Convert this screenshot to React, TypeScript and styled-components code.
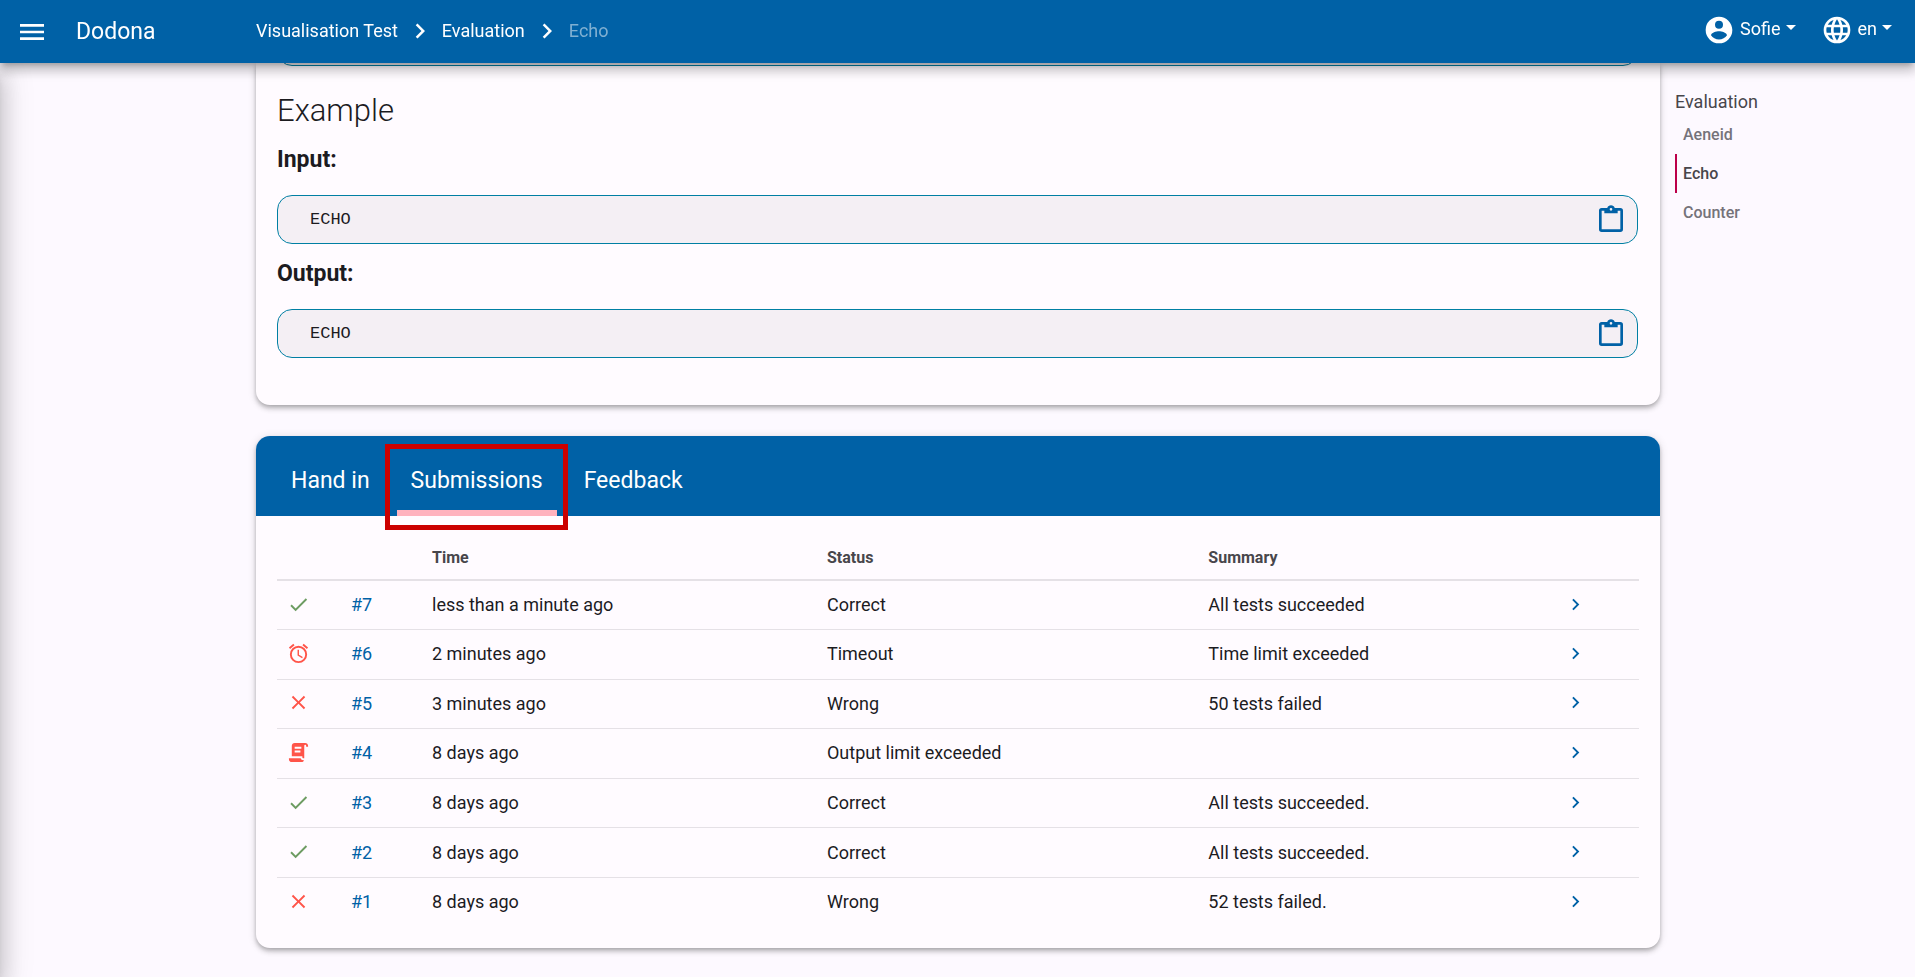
import React from "react";
import styled, { createGlobalStyle } from "styled-components";

const color = {
  primary: "#0061a6",
  onPrimary: "#ffffff",
  crumbMuted: "#7fb0d2",
  page: "#fdf9ff",
  surface: "#fffbff",
  code: "#f4eff4",
  codeBorder: "#007fa3",
  text: "#1c1b1f",
  muted: "#48464b",
  faint: "#75737a",
  line: "#e5e1e6",
  accent: "#bc0049",
  indicator: "#ffb2be",
  success: "#6d9c62",
  danger: "#ff5449",
  marker: "#cc0000",
};

const GlobalStyle = createGlobalStyle`
  *, *::before, *::after { box-sizing: border-box; }
  body {
    margin: 0;
    background: ${color.page};
    color: ${color.text};
    font-family: Roboto, "Liberation Sans", sans-serif;
    font-size: 18px;
    line-height: 24px;
  }
  a { color: inherit; text-decoration: none; }
  button { font: inherit; color: inherit; background: none; border: 0; padding: 0; cursor: pointer; }
`;

const paths = {
  menu: "M3,6H21V8H3V6M3,11H21V13H3V11M3,16H21V18H3V16Z",
  chevron: "M8.59,16.58L13.17,12L8.59,7.41L10,6L16,12L10,18L8.59,16.58Z",
  account:
    "M12,19.2C9.5,19.2 7.29,17.92 6,16C6.03,14 10,12.9 12,12.9C14,12.9 17.97,14 18,16C16.71,17.92 14.5,19.2 12,19.2M12,5A3,3 0 0,1 15,8A3,3 0 0,1 12,11A3,3 0 0,1 9,8A3,3 0 0,1 12,5M12,2A10,10 0 0,0 2,12A10,10 0 0,0 12,22A10,10 0 0,0 22,12C22,6.47 17.5,2 12,2Z",
  globe:
    "M16.36,14C16.44,13.34 16.5,12.68 16.5,12C16.5,11.32 16.44,10.66 16.36,10H19.74C19.9,10.64 20,11.31 20,12C20,12.69 19.9,13.36 19.74,14M14.59,19.56C15.19,18.45 15.65,17.25 15.97,16H18.92C17.96,17.65 16.43,18.93 14.59,19.56M14.34,14H9.66C9.56,13.34 9.5,12.68 9.5,12C9.5,11.32 9.56,10.65 9.66,10H14.34C14.43,10.65 14.5,11.32 14.5,12C14.5,12.68 14.43,13.34 14.34,14M12,19.96C11.17,18.76 10.5,17.43 10.09,16H13.91C13.5,17.43 12.83,18.76 12,19.96M8,8H5.08C6.03,6.34 7.57,5.06 9.4,4.44C8.8,5.55 8.35,6.75 8,8M5.08,16H8C8.35,17.25 8.8,18.45 9.4,19.56C7.57,18.93 6.03,17.65 5.08,16M4.26,14C4.1,13.36 4,12.69 4,12C4,11.31 4.1,10.64 4.26,10H7.64C7.56,10.66 7.5,11.32 7.5,12C7.5,12.68 7.56,13.34 7.64,14M12,4.03C12.83,5.23 13.5,6.57 13.91,8H10.09C10.5,6.57 11.17,5.23 12,4.03M18.92,8H15.97C15.65,6.75 15.19,5.55 14.59,4.44C16.43,5.07 17.96,6.34 18.92,8M12,2C6.47,2 2,6.5 2,12A10,10 0 0,0 12,22A10,10 0 0,0 22,12A10,10 0 0,0 12,2Z",
  clipboard:
    "M19,3H14.82C14.4,1.84 13.3,1 12,1C10.7,1 9.6,1.84 9.18,3H5A2,2 0 0,0 3,5V19A2,2 0 0,0 5,21H19A2,2 0 0,0 21,19V5A2,2 0 0,0 19,3M12,3A1,1 0 0,1 13,4A1,1 0 0,1 12,5A1,1 0 0,1 11,4A1,1 0 0,1 12,3M7,7H17V5H19V19H5V5H7V7Z",
  check: "M21,7L9,19L3.5,13.5L4.91,12.09L9,16.17L19.59,5.59L21,7Z",
  close:
    "M19,6.41L17.59,5L12,10.59L6.41,5L5,6.41L10.59,12L5,17.59L6.41,19L12,13.41L17.59,19L19,17.59L13.41,12L19,6.41Z",
  alarm:
    "M12,20A7,7 0 0,1 5,13A7,7 0 0,1 12,6A7,7 0 0,1 19,13A7,7 0 0,1 12,20M12,4A9,9 0 0,0 3,13A9,9 0 0,0 12,22A9,9 0 0,0 21,13A9,9 0 0,0 12,4M12.5,8H11V14L15.75,16.85L16.5,15.62L12.5,13.25V8M7.88,3.39L6.6,1.86L2,5.71L3.29,7.24L7.88,3.39M22,5.72L17.4,1.86L16.11,3.39L20.71,7.25L22,5.72Z",
  script:
    "M17.8,20C17.4,21.2 16.3,22 15,22H5C3.3,22 2,20.7 2,19V18H5L14.2,18C14.6,19.2 15.7,20 17,20H17.8M19,2C20.7,2 22,3.3 22,5V6H20V5C20,4.4 19.6,4 19,4C18.4,4 18,4.4 18,5V18H17C16.4,18 16,17.6 16,17V16H5V5C5,3.3 6.3,2 8,2H19M8,6V8H15V6H8M8,10V12H14V10H8Z",
};

type IconName = keyof typeof paths;

const Svg = styled.svg<{ $size: number; $tone?: string }>`
  display: block;
  flex: none;
  width: ${(p) => p.$size}px;
  height: ${(p) => p.$size}px;
  fill: ${(p) => p.$tone ?? "currentColor"};
`;

function Icon({ name, size, tone }: { name: IconName; size: number; tone?: string }) {
  return (
    <Svg viewBox="0 0 24 24" $size={size} $tone={tone} aria-hidden="true">
      <path d={paths[name]} />
    </Svg>
  );
}

const Page = styled.div`
  min-height: 100vh;
  overflow-x: hidden;
`;

const Drawer = styled.aside`
  position: fixed;
  top: 63px;
  bottom: 0;
  left: 0;
  width: 288px;
  transform: translateX(-100%);
  box-shadow: 0 8px 10px -5px rgba(0, 0, 0, 0.2), 0 16px 24px 2px rgba(0, 0, 0, 0.14), 0 6px 30px 5px rgba(0, 0, 0, 0.12);
`;

const TopBar = styled.header`
  position: relative;
  z-index: 2;
  display: grid;
  grid-template-columns: 256px 1fr auto;
  align-items: center;
  height: 63px;
  padding: 0 23px 2px 0;
  background: ${color.primary};
  color: ${color.onPrimary};
  box-shadow: 0 5px 5px -3px rgba(0, 0, 0, 0.2), 0 8px 10px 1px rgba(0, 0, 0, 0.14), 0 3px 14px 2px rgba(0, 0, 0, 0.12);
`;

const Brand = styled.div`
  display: flex;
  align-items: center;
  gap: 28px;
  padding: 2px 0 0 16px;
  font-size: 23px;
`;

const Crumbs = styled.nav`
  display: flex;
  align-items: center;
  gap: 7px;
`;

const Crumb = styled.a<{ $current?: boolean }>`
  color: ${(p) => (p.$current ? color.crumbMuted : "inherit")};
`;

const BarActions = styled.div`
  display: flex;
  gap: 25px;
  padding-bottom: 2px;
`;

const BarButton = styled.button`
  display: flex;
  align-items: center;
  gap: 5px;
`;

const BarLabel = styled.span`
  display: flex;
  align-items: center;
  gap: 5px;
  padding-bottom: 2px;
  &::after {
    content: "";
    margin-bottom: 2px;
    border: 5px solid transparent;
    border-top-color: currentColor;
    border-bottom: 0;
  }
`;

const Layout = styled.div`
  display: grid;
  grid-template-columns: 256px minmax(0, 1fr) 255px;
`;

const Main = styled.main`
  grid-column: 2;
  display: flex;
  flex-direction: column;
  gap: 31px;
  padding-bottom: 29px;
`;

const Card = styled.section<{ $continued?: boolean }>`
  overflow: hidden;
  border-radius: ${(p) => (p.$continued ? "0 0 14px 14px" : "14px")};
  background: ${color.surface};
  box-shadow: 0 2px 4px -1px rgba(0, 0, 0, 0.2), 0 4px 5px rgba(0, 0, 0, 0.14), 0 1px 10px rgba(0, 0, 0, 0.12);
`;

const Description = styled.div`
  padding: 0 22px 47px 21px;
`;

const CodeTail = styled.div`
  display: flex;
  align-items: flex-end;
  height: 3px;
  overflow: hidden;
`;

const CodeBox = styled.div`
  flex: 1 0 auto;
  display: flex;
  align-items: center;
  justify-content: space-between;
  height: 49px;
  padding: 0 10px 0 32px;
  border: 1px solid ${color.codeBorder};
  border-radius: 15px;
  background: ${color.code};
`;

const CodeText = styled.code`
  font-family: "Liberation Mono", monospace;
  font-size: 17px;
`;

const CopyButton = styled.button`
  color: ${color.primary};
`;

const Heading = styled.h2`
  margin: 25px 0 0;
  font-size: 31px;
  font-weight: 300;
  line-height: 39px;
`;

const Subheading = styled.h3`
  margin: 16px 0 21px;
  font-size: 23px;
  font-weight: 700;
  line-height: 28px;
`;

const TabBar = styled.nav`
  display: flex;
  gap: 13px;
  height: 80px;
  padding: 0 21px;
  background: ${color.primary};
  color: ${color.onPrimary};
`;

const Tab = styled.a<{ $active?: boolean }>`
  position: relative;
  display: flex;
  align-items: center;
  padding: 16px 14px 0;
  border-bottom: 6px solid ${(p) => (p.$active ? color.indicator : "transparent")};
  font-size: 23px;
`;

const Marker = styled.span`
  position: absolute;
  z-index: 1;
  inset: 8px -11px -20px -12px;
  border: 5px solid ${color.marker};
`;

const TableArea = styled.div`
  padding: 21px;
`;

const Table = styled.table`
  width: 100%;
  height: 390px;
  table-layout: fixed;
  border-collapse: collapse;
`;

const Column = styled.col<{ $width?: string }>`
  width: ${(p) => p.$width ?? "auto"};
`;

const HeadCell = styled.th`
  height: 43px;
  padding: 0 10px;
  border-bottom: 2px solid ${color.line};
  color: ${color.muted};
  font-size: 16px;
  font-weight: 700;
  text-align: left;
`;

const Row = styled.tr`
  & + & { border-top: 1px solid ${color.line}; }
`;

const Cell = styled.td`
  height: 49px;
  padding: 0 10px;
`;

const IconCell = styled(Cell)`
  padding-bottom: 2px;
`;

const TextLink = styled.a`
  color: ${color.primary};
`;

const IconLink = styled.a`
  display: flex;
  color: ${color.primary};
`;

const Toc = styled.nav`
  display: flex;
  flex-direction: column;
  padding: 26px 15px;
  color: ${color.muted};
`;

const TocTitle = styled.a`
  line-height: 26px;
`;

const TocItem = styled.a<{ $active?: boolean }>`
  padding: 7px 0 7px 6px;
  border-left: 2px solid ${(p) => (p.$active ? color.accent : "transparent")};
  color: ${(p) => (p.$active ? color.muted : color.faint)};
  font-size: 16px;
  font-weight: 500;
  line-height: 25px;
`;

type Submission = {
  id: number;
  icon: IconName;
  ok?: boolean;
  time: string;
  status: string;
  summary: string;
};

const submissions: Submission[] = [
  { id: 7, icon: "check", ok: true, time: "less than a minute ago", status: "Correct", summary: "All tests succeeded" },
  { id: 6, icon: "alarm", time: "2 minutes ago", status: "Timeout", summary: "Time limit exceeded" },
  { id: 5, icon: "close", time: "3 minutes ago", status: "Wrong", summary: "50 tests failed" },
  { id: 4, icon: "script", time: "8 days ago", status: "Output limit exceeded", summary: "" },
  { id: 3, icon: "check", ok: true, time: "8 days ago", status: "Correct", summary: "All tests succeeded." },
  { id: 2, icon: "check", ok: true, time: "8 days ago", status: "Correct", summary: "All tests succeeded." },
  { id: 1, icon: "close", time: "8 days ago", status: "Wrong", summary: "52 tests failed." },
];

function CodeSample({ title, code }: { title: string; code: string }) {
  return (
    <>
      <Subheading>{title}</Subheading>
      <CodeBox>
        <CodeText>{code}</CodeText>
        <CopyButton type="button" aria-label="Copy">
          <Icon name="clipboard" size={32} />
        </CopyButton>
      </CodeBox>
    </>
  );
}

export default function App() {
  return (
    <Page>
      <GlobalStyle />
      <TopBar>
        <Brand>
          <button type="button" aria-label="Menu">
            <Icon name="menu" size={32} />
          </button>
          <a href="#home">Dodona</a>
        </Brand>
        <Crumbs>
          <Crumb href="#course">Visualisation Test</Crumb>
          <Icon name="chevron" size={30} />
          <Crumb href="#series">Evaluation</Crumb>
          <Icon name="chevron" size={30} />
          <Crumb href="#exercise" $current>Echo</Crumb>
        </Crumbs>
        <BarActions>
          <BarButton type="button">
            <Icon name="account" size={32} />
            <BarLabel>Sofie</BarLabel>
          </BarButton>
          <BarButton type="button">
            <Icon name="globe" size={32} />
            <BarLabel>en</BarLabel>
          </BarButton>
        </BarActions>
      </TopBar>
      <Drawer />
      <Layout>
        <Main>
          <Card $continued>
            <Description>
              <CodeTail>
                <CodeBox />
              </CodeTail>
              <Heading>Example</Heading>
              <CodeSample title="Input:" code="ECHO" />
              <CodeSample title="Output:" code="ECHO" />
            </Description>
          </Card>
          <Card>
            <TabBar>
              <Tab href="#hand-in">Hand in</Tab>
              <Tab href="#submissions" $active>
                Submissions
                <Marker />
              </Tab>
              <Tab href="#feedback">Feedback</Tab>
            </TabBar>
            <TableArea>
              <Table>
                <colgroup>
                  <Column $width="64px" />
                  <Column $width="81px" />
                  <Column $width="29%" />
                  <Column $width="28%" />
                  <Column />
                  <Column $width="85px" />
                </colgroup>
                <thead>
                  <tr>
                    <HeadCell />
                    <HeadCell />
                    <HeadCell>Time</HeadCell>
                    <HeadCell>Status</HeadCell>
                    <HeadCell>Summary</HeadCell>
                    <HeadCell />
                  </tr>
                </thead>
                <tbody>
                  {submissions.map((s) => (
                    <Row key={s.id}>
                      <IconCell>
                        <Icon name={s.icon} size={23} tone={s.ok ? color.success : color.danger} />
                      </IconCell>
                      <Cell>
                        <TextLink href={`#submission-${s.id}`}>#{s.id}</TextLink>
                      </Cell>
                      <Cell>{s.time}</Cell>
                      <Cell>{s.status}</Cell>
                      <Cell>{s.summary}</Cell>
                      <IconCell>
                        <IconLink href={`#submission-${s.id}`} aria-label={`Open submission ${s.id}`}>
                          <Icon name="chevron" size={23} />
                        </IconLink>
                      </IconCell>
                    </Row>
                  ))}
                </tbody>
              </Table>
            </TableArea>
          </Card>
        </Main>
        <Toc>
          <TocTitle href="#evaluation">Evaluation</TocTitle>
          <TocItem href="#aeneid">Aeneid</TocItem>
          <TocItem href="#echo" $active>Echo</TocItem>
          <TocItem href="#counter">Counter</TocItem>
        </Toc>
      </Layout>
    </Page>
  );
}
